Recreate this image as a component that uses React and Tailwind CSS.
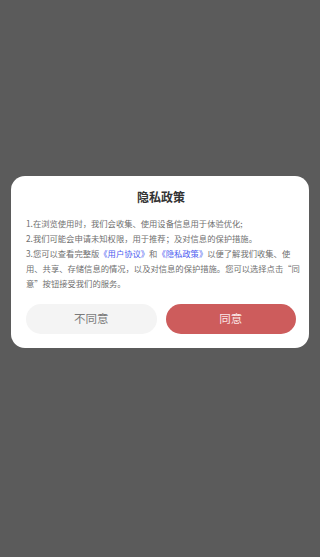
import React from "react";

const PrivacyDialog = () => {
  const link = "text-[#4c5cf0]";

  return (
    <div className="mx-[11px] rounded-[14px] bg-white pl-[15px] pr-[13px] pt-3 pb-[14px]">
      <h2 className="text-center text-[12px] leading-[18px] font-bold text-[#333333]">
        隐私政策
      </h2>

      <div className="mt-[10px] text-[8.3px] leading-[15px] text-[#707070]">
        <p className="whitespace-nowrap">1.在浏览使用时，我们会收集、使用设备信息用于体验优化;</p>
        <p className="whitespace-nowrap">2.我们可能会申请未知权限，用于推荐；及对信息的保护措施。</p>
        <p>
          <span className="block whitespace-nowrap">
            3.您可以查看完整版<span className={link}>《用户协议》</span>和
            <span className={link}>《隐私政策》</span>以便了解我们收集、使
          </span>
          <span className="block whitespace-nowrap">
            用、共享、存储信息的情况，以及对信息的保护措施。您可以选择点击“同
          </span>
          <span className="block whitespace-nowrap">意”按钮接受我们的服务。</span>
        </p>
      </div>

      {/* buttons */}
      <div className="mt-[13px] flex gap-[9px]">
        <button className="h-[30px] flex-1 rounded-[15px] bg-[#f4f4f4] text-[11.5px] text-[#7a7a7a]">
          不同意
        </button>
        <button className="h-[30px] flex-1 rounded-[15px] bg-[#cd5c5c] text-[11.5px] text-[#fbe6e6]">
          同意
        </button>
      </div>
    </div>
  );
};

export default function App() {
  return (
    <div
      className="h-[557px] w-[320px] bg-[#5b5b5b] pt-[176px]"
      style={{ fontFamily: '"Noto Sans CJK SC", "Noto Sans", sans-serif' }}
    >
      <PrivacyDialog />
    </div>
  );
}
